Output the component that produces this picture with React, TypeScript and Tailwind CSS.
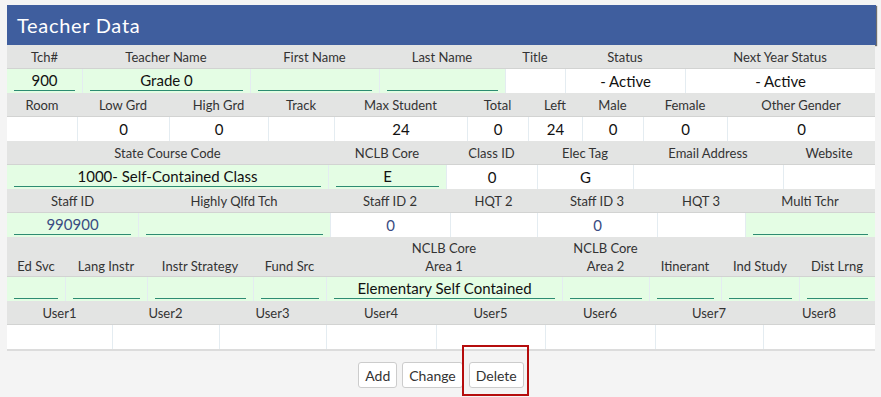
import React from 'react';

type Kind = 'input' | 'text';

interface Field {
  label: string;
  width: number;
  value?: string;
  kind: Kind;
  link?: boolean;
}

const rows: Field[][] = [
  [
    { label: 'Tch#', width: 75, value: '900', kind: 'input' },
    { label: 'Teacher Name', width: 168, value: 'Grade 0', kind: 'input' },
    { label: 'First Name', width: 129, kind: 'input' },
    { label: 'Last Name', width: 126, kind: 'input' },
    { label: 'Title', width: 60, kind: 'text' },
    { label: 'Status', width: 120, value: '- Active', kind: 'text' },
    { label: 'Next Year Status', width: 190, value: '- Active', kind: 'text' },
  ],
  [
    { label: 'Room', width: 70, kind: 'text' },
    { label: 'Low Grd', width: 92, value: '0', kind: 'text' },
    { label: 'High Grd', width: 99, value: '0', kind: 'text' },
    { label: 'Track', width: 66, kind: 'text' },
    { label: 'Max Student', width: 133, value: '24', kind: 'text' },
    { label: 'Total', width: 61, value: '0', kind: 'text' },
    { label: 'Left', width: 54, value: '24', kind: 'text' },
    { label: 'Male', width: 61, value: '0', kind: 'text' },
    { label: 'Female', width: 84, value: '0', kind: 'text' },
    { label: 'Other Gender', width: 148, value: '0', kind: 'text' },
  ],
  [
    { label: 'State Course Code', width: 321, value: '1000- Self-Contained Class', kind: 'input' },
    { label: 'NCLB Core', width: 118, value: 'E', kind: 'input' },
    { label: 'Class ID', width: 91, value: '0', kind: 'text' },
    { label: 'Elec Tag', width: 96, value: 'G', kind: 'text' },
    { label: 'Email Address', width: 150, kind: 'text' },
    { label: 'Website', width: 92, kind: 'text' },
  ],
  [
    { label: 'Staff ID', width: 131, value: '990900', kind: 'input', link: true },
    { label: 'Highly Qlfd Tch', width: 192, kind: 'input' },
    { label: 'Staff ID 2', width: 120, value: '0', kind: 'text', link: true },
    { label: 'HQT 2', width: 87, kind: 'text' },
    { label: 'Staff ID 3', width: 120, value: '0', kind: 'text', link: true },
    { label: 'HQT 3', width: 88, kind: 'text' },
    { label: 'Multi Tchr', width: 130, kind: 'input' },
  ],
  [
    { label: 'Ed Svc', width: 58, kind: 'input' },
    { label: 'Lang Instr', width: 82, kind: 'input' },
    { label: 'Instr Strategy', width: 106, kind: 'input' },
    { label: 'Fund Src', width: 73, kind: 'input' },
    { label: 'NCLB Core\nArea 1', width: 236, value: 'Elementary Self Contained', kind: 'input' },
    { label: 'NCLB Core\nArea 2', width: 87, kind: 'input' },
    { label: 'Itinerant', width: 72, kind: 'input' },
    { label: 'Ind Study', width: 78, kind: 'input' },
    { label: 'Dist Lrng', width: 76, kind: 'input' },
  ],
  [
    { label: 'User1', width: 105, kind: 'text' },
    { label: 'User2', width: 107, kind: 'text' },
    { label: 'User3', width: 107, kind: 'text' },
    { label: 'User4', width: 110, kind: 'text' },
    { label: 'User5', width: 109, kind: 'text' },
    { label: 'User6', width: 110, kind: 'text' },
    { label: 'User7', width: 108, kind: 'text' },
    { label: 'User8', width: 112, kind: 'text' },
  ],
];

const FieldRow: React.FC<{ fields: Field[]; tall?: boolean }> = ({ fields, tall }) => {
  return (
    <div>
      {/* Labels */}
      <div
        className={`flex bg-[#e3e4e3] border-b border-[#d2d3d2] ${
          tall ? 'h-[40px] items-end pb-[1px]' : 'h-[24px] items-center'
        }`}
      >
        {fields.map((f) => (
          <div
            key={f.label}
            style={{ width: f.width }}
            className="shrink-0 text-center text-[13px] leading-[18px] text-[#333] whitespace-pre-line"
          >
            {f.label}
          </div>
        ))}
      </div>

      {/* Values */}
      <div className="flex h-[24px]">
        {fields.map((f, i) => (
          <div
            key={f.label}
            style={{ width: f.width }}
            className={`shrink-0 flex text-[15px] ${
              f.link ? 'text-[#3a4c82]' : 'text-[#111]'
            } ${i > 0 ? 'border-l border-[#e4ecf1]' : ''} ${
              f.kind === 'input'
                ? 'bg-[#e4fde4] items-end pb-[2px] pl-[7px] pr-[7px]'
                : 'bg-white items-center justify-center'
            }`}
          >
            {f.kind === 'input' ? (
              <div className="w-full h-[20px] border-b border-[#2d8c72] flex items-center justify-center leading-none">
                {f.value}
              </div>
            ) : (
              <span className="leading-none">{f.value}</span>
            )}
          </div>
        ))}
      </div>
    </div>
  );
};

export default function App() {
  return (
    <div
      className="w-[881px] h-[397px] bg-[#f4f4f4] overflow-hidden"
      style={{ fontFamily: 'Lato, "Open Sans", sans-serif' }}
    >
      <div className="pt-[5px] pl-[7px]">
        <div className="w-[868px] bg-white border-b-2 border-[#dcdcdc]">
          {/* Header */}
          <div className="h-[40px] w-[869px] bg-[#3f5e9e] shadow-[1px_1px_1px_rgba(0,0,0,0.55)] flex items-center pl-[10px]">
            <span className="text-white text-[20px] tracking-[0.7px]">Teacher Data</span>
          </div>

          {rows.map((r, i) => (
            <FieldRow key={i} fields={r} tall={i === 4} />
          ))}
        </div>

        {/* Buttons */}
        <div className="w-[868px] flex justify-center gap-[5px] mt-[11px]">
          <button className="h-[26px] px-[6px] bg-white border border-[#cccccc] rounded-[3px] text-[14px] text-[#333]">
            Add
          </button>
          <button className="h-[26px] px-[6px] bg-white border border-[#cccccc] rounded-[3px] text-[14px] text-[#333]">
            Change
          </button>
          <div className="relative ml-[1px]">
            <button className="h-[26px] px-[6px] bg-white border border-[#cccccc] rounded-[3px] text-[14px] text-[#333]">
              Delete
            </button>
            <div className="absolute left-[-7px] top-[-17px] w-[67px] h-[51px] border-2 border-[#b50d0d] pointer-events-none" />
          </div>
        </div>
      </div>
    </div>
  );
}
